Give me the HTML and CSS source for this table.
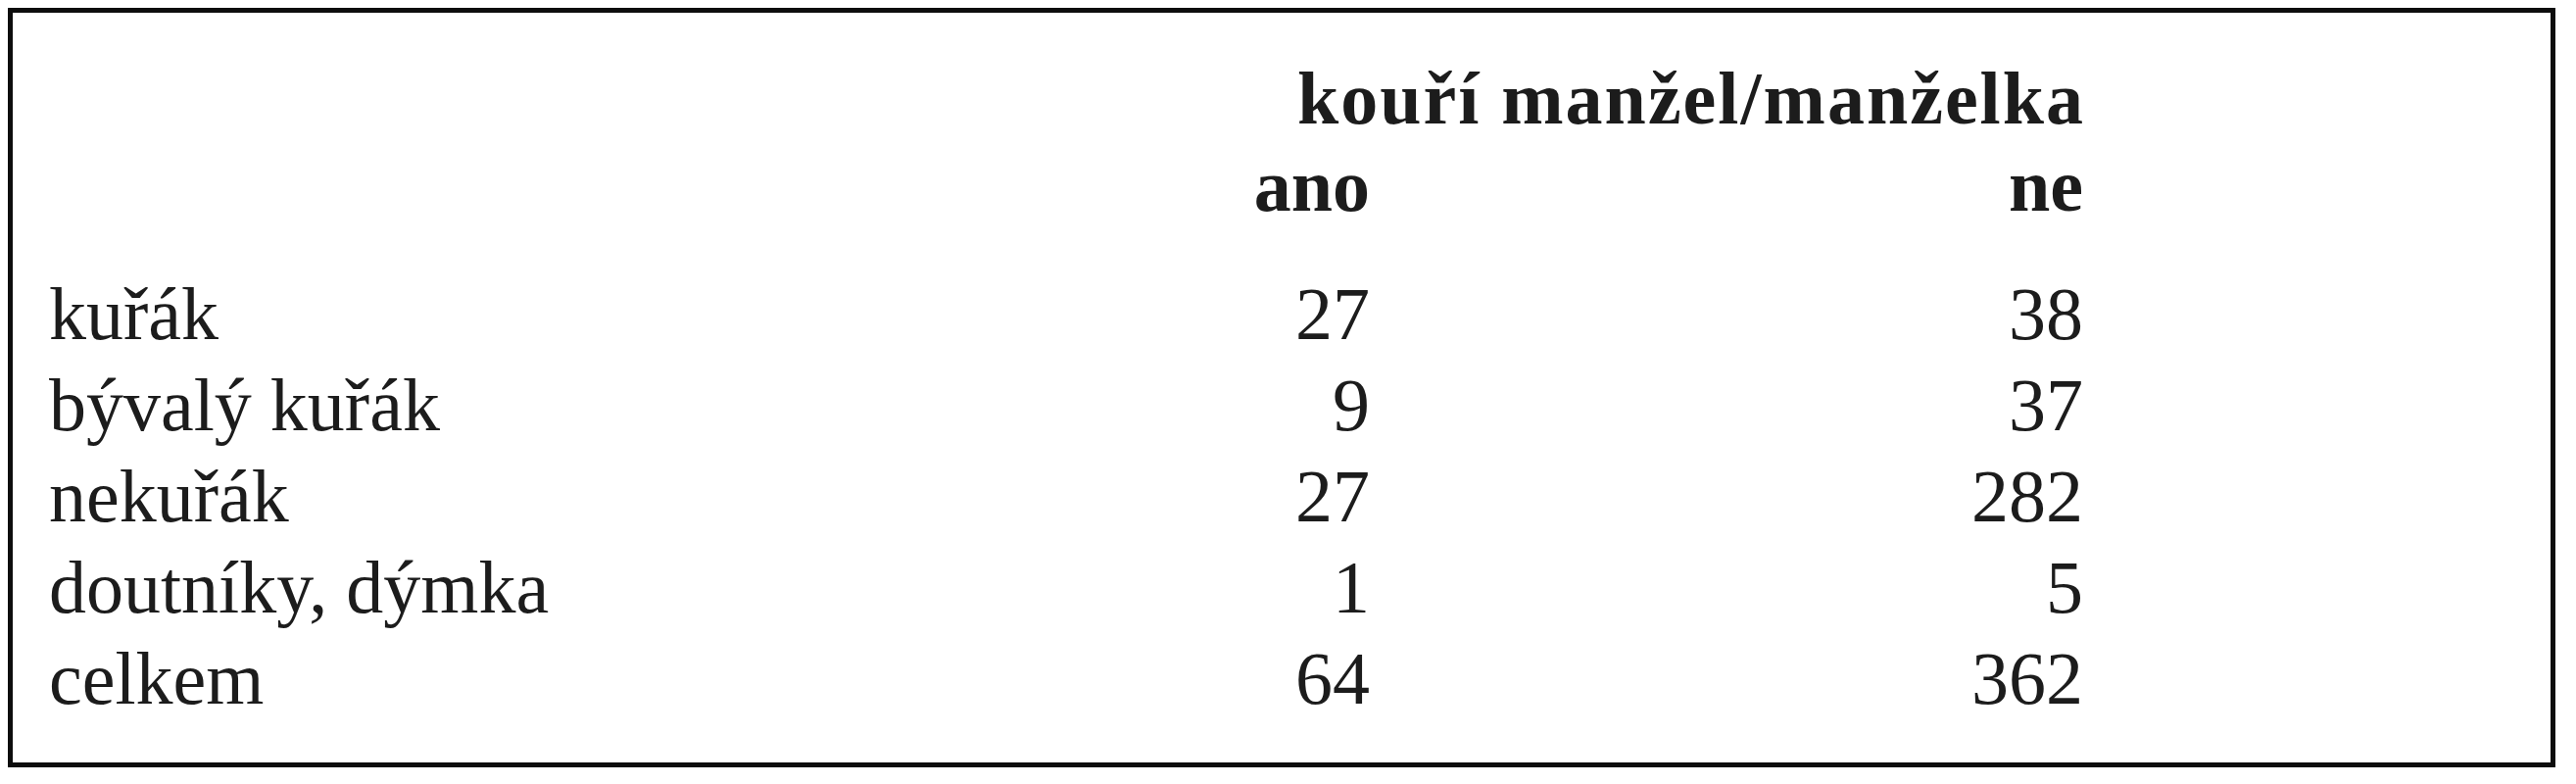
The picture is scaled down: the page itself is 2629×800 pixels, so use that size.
FILE: index.html
```html
<!DOCTYPE html>
<html lang="cs">
<head>
<meta charset="utf-8">
<title>Tabulka</title>
<link rel="stylesheet" href="styles.css">
</head>
<body>
<div class="box">
  <div class="grid head">
    <div class="span">kouří manžel/manželka</div>
    <div class="c1"></div>
    <div class="num">ano</div>
    <div class="num">ne</div>
  </div>
  <div class="grid rows">
    <div class="label">kuřák</div><div class="num">27</div><div class="num">38</div>
    <div class="label">bývalý kuřák</div><div class="num">9</div><div class="num">37</div>
    <div class="label">nekuřák</div><div class="num">27</div><div class="num">282</div>
    <div class="label">doutníky, dýmka</div><div class="num">1</div><div class="num">5</div>
    <div class="label">celkem</div><div class="num">64</div><div class="num">362</div>
  </div>
</div>
</body>
</html>
```

FILE: styles.css
```css
html, body {
  background: #ffffff;
}
body {
  margin: 8px;
  font-family: "Liberation Serif", "Times New Roman", serif;
  font-size: 76px;
  color: #1c1c1c;
}
.box {
  box-sizing: border-box;
  width: 2600px;
  height: 775px;
  border: 5px solid #0d0d0d;
  padding: 43px 0 0 37px;
}
.grid {
  display: grid;
  grid-template-columns: 1000px 348px 728px;
}
.head {
  font-weight: bold;
  line-height: 89px;
}
.head .span {
  grid-column: 2 / 4;
  text-align: right;
  letter-spacing: 2px;
  margin-right: -2px;
}
.rows {
  margin-top: 40px;
  line-height: 93px;
}
.num {
  text-align: right;
}
.label {
  text-align: left;
}
```
